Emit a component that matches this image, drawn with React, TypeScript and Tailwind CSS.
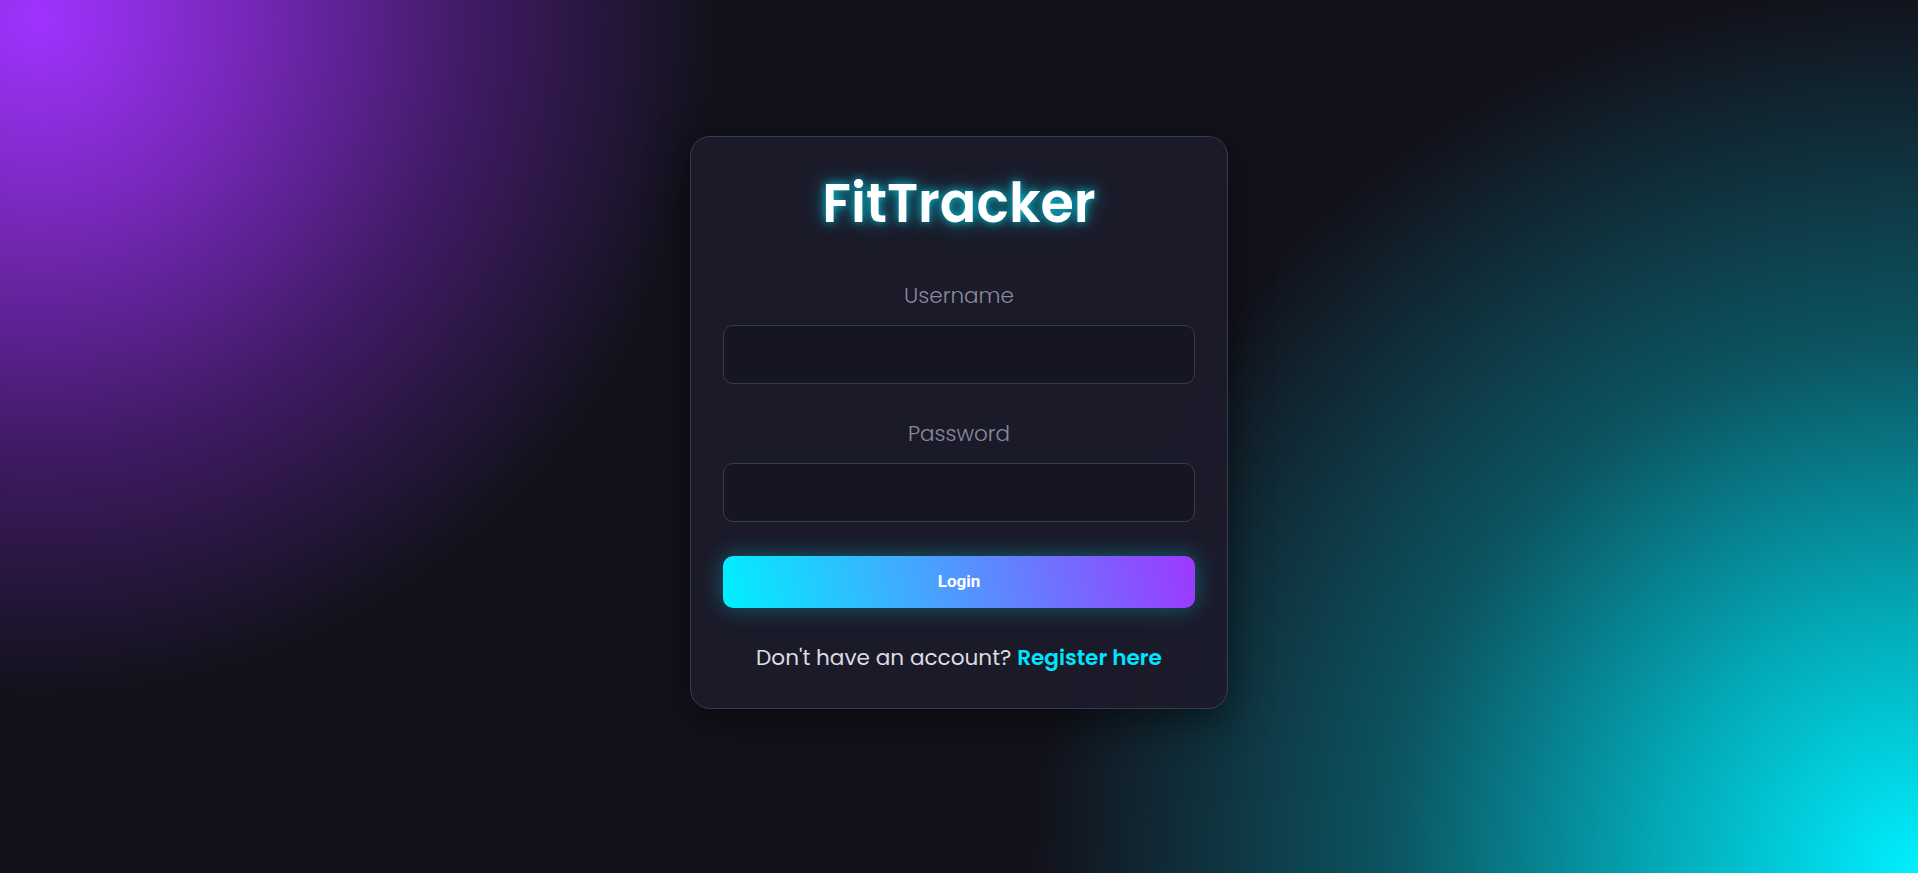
import { useState } from "react";

const LoginPage = () => {
    const [username, setUsername] = useState("");
    const [password, setPassword] = useState("");

    return (
        <div className="min-h-screen w-full flex items-center justify-center pb-[28px] bg-[#12121c] bg-[radial-gradient(circle_700px_at_2%_2%,#a033ff_0%,rgba(128,42,200,0.9)_30%,rgba(82,30,130,0.7)_62%,rgba(18,18,28,0)_96%),radial-gradient(circle_880px_at_100%_100%,#00f0ff_0%,rgba(0,200,215,0.82)_30%,rgba(8,125,140,0.62)_60%,rgba(18,18,28,0)_100%)] font-['Poppins','Inter',sans-serif]">
            {/* Tarjeta de login */}
            <div className="w-[538px] rounded-[20px] border border-[#3a3a4e] bg-[rgba(28,27,43,0.94)] px-8 pt-[36px] pb-[36px] shadow-[0_10px_40px_rgba(0,0,0,0.55)]">
                <h1 className="text-center text-[54px] leading-[60px] font-semibold text-white [text-shadow:0_0_10px_rgba(0,229,255,0.8),0_0_22px_rgba(0,229,255,0.45)]">
                    FitTracker
                </h1>

                <form className="mt-[49px]" onSubmit={(e) => e.preventDefault()}>
                    <div>
                        <label htmlFor="username" className="block text-center text-[21.5px] leading-[27px] font-light text-[#8b8a9c] mb-[16px]">
                            Username
                        </label>
                        <input
                            id="username"
                            type="text"
                            value={username}
                            onChange={(e) => setUsername(e.target.value)}
                            className="w-full h-[59px] rounded-[10px] border border-[#3a3a4e] bg-[#161622] px-4 text-white outline-none"
                        />
                    </div>

                    <div className="mt-[36px]">
                        <label htmlFor="password" className="block text-center text-[21.5px] leading-[27px] font-light text-[#8b8a9c] mb-[16px]">
                            Password
                        </label>
                        <input
                            id="password"
                            type="password"
                            value={password}
                            onChange={(e) => setPassword(e.target.value)}
                            className="w-full h-[59px] rounded-[10px] border border-[#3a3a4e] bg-[#161622] px-4 text-white outline-none"
                        />
                    </div>

                    <button
                        type="submit"
                        className="mt-[34px] w-full h-[52px] rounded-[10px] bg-[linear-gradient(75deg,#00f0ff_0%,#4aa0ff_45%,#9d38ff_100%)] text-white text-[17px] font-bold font-['Roboto','Liberation_Sans',sans-serif] shadow-[0_0_22px_rgba(0,229,255,0.35)]"
                    >
                        Login
                    </button>
                </form>

                <p className="mt-[36px] text-center text-[21.6px] leading-[28px] text-[#dcdce2]">
                    Don't have an account?{" "}
                    <a href="#" className="font-semibold text-[#00e5ff]">
                        Register here
                    </a>
                </p>
            </div>
        </div>
    );
};

export default LoginPage;
